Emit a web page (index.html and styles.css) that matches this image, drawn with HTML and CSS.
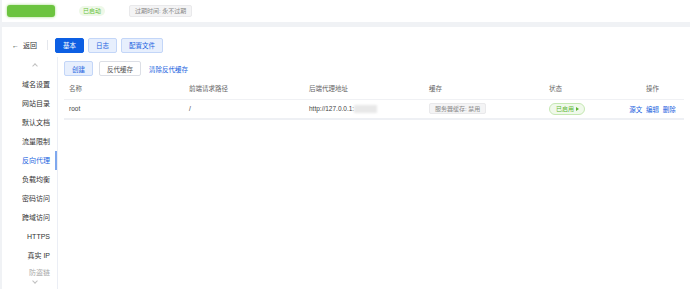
FILE: index.html
```html
<!DOCTYPE html>
<html lang="zh-CN">
<head>
    <meta charset="UTF-8">
    <meta name="viewport" content="width=device-width, initial-scale=1.0">
    <title>网站设置</title>
    <link rel="stylesheet" href="styles.css">
</head>
<body>
    <div class="top-bar">
        <span class="site-name"></span>
        <span class="tag-run">已启动</span>
        <span class="tag-expire">过期时间: 永不过期</span>
    </div>

    <div class="panel">
        <div class="panel-head">
            <a class="back">&larr;&nbsp; 返回</a>
            <span class="divider"></span>
            <button class="btn btn-primary">基本</button>
            <button class="btn btn-light">日志</button>
            <button class="btn btn-light">配置文件</button>
        </div>

        <div class="panel-body">
            <div class="side-nav">
                <div class="nav-arrow"><i class="chev up"></i></div>
                <div class="nav-item">域名设置</div>
                <div class="nav-item">网站目录</div>
                <div class="nav-item">默认文档</div>
                <div class="nav-item">流量限制</div>
                <div class="nav-item active">反向代理</div>
                <div class="nav-item">负载均衡</div>
                <div class="nav-item">密码访问</div>
                <div class="nav-item">跨域访问</div>
                <div class="nav-item">HTTPS</div>
                <div class="nav-item">真实 IP</div>
                <div class="nav-item faded">防盗链</div>
                <div class="nav-fade"><i class="chev down"></i></div>
            </div>

            <div class="content">
                <div class="toolbar">
                    <button class="btn btn-light">创建</button>
                    <button class="btn btn-plain">反代缓存</button>
                    <a class="link">清除反代缓存</a>
                </div>

                <table class="proxy-table">
                    <colgroup>
                        <col class="w-120">
                        <col class="w-120">
                        <col class="w-120">
                        <col class="w-120">
                        <col class="w-77">
                        <col>
                    </colgroup>
                    <thead>
                        <tr>
                            <th>名称</th>
                            <th>前端请求路径</th>
                            <th>后端代理地址</th>
                            <th>缓存</th>
                            <th>状态</th>
                            <th class="col-ops">操作</th>
                        </tr>
                    </thead>
                    <tbody>
                        <tr>
                            <td>root</td>
                            <td>/</td>
                            <td>http://127.0.0.1:<span class="masked"></span></td>
                            <td><span class="tag-cache">服务器缓存: 禁用</span></td>
                            <td><span class="tag-status">已启用 <i class="tri"></i></span></td>
                            <td class="col-ops">
                                <a class="link">源文</a>
                                <a class="link">编辑</a>
                                <a class="link">删除</a>
                            </td>
                        </tr>
                    </tbody>
                </table>
            </div>
        </div>
    </div>
</body>
</html>
```

FILE: styles.css
```css
* {
    box-sizing: border-box;
}
body {
    margin: 0;
    padding-left: 2px;
    height: 289px;
    overflow: hidden;
    background-color: #f0f2f5;
    font-family: "Liberation Sans", "Noto Sans CJK SC", sans-serif;
    color: #333;
    display: flex;
    flex-direction: column;
}
.top-bar {
    height: 22px;
    background-color: #fff;
    display: flex;
    align-items: center;
    padding-left: 5px;
}
.site-name {
    width: 48px;
    height: 12px;
    background-color: #6cc43f;
    border-radius: 3px;
    box-shadow: 0 0 3px #9fdc7c;
}
.tag-run {
    margin-left: 24px;
    padding: 0 4px;
    height: 10px;
    line-height: 10px;
    font-size: 6px;
    color: #67c23a;
    background-color: #eef8e8;
    border-radius: 5px;
}
.tag-expire {
    margin-left: 24px;
    padding: 0 5px;
    height: 12px;
    line-height: 11px;
    font-size: 6px;
    color: #888;
    background-color: #f4f4f5;
    border: 1px solid #e9e9eb;
    border-radius: 2px;
}
.panel {
    margin-top: 5px;
    flex: 1;
    background-color: #fff;
    display: flex;
    flex-direction: column;
}
.panel-head {
    display: flex;
    align-items: center;
    padding: 10px 0 0 10px;
    height: 26px;
}
.back {
    font-size: 7px;
    color: #333;
    width: 35px;
}
.divider {
    width: 1px;
    height: 10px;
    background-color: #e4e7ed;
    margin-right: 7px;
}
.btn {
    height: 15px;
    padding: 0 7px;
    font-family: inherit;
    font-size: 6.5px;
    border-radius: 2px;
    margin-right: 4px;
    cursor: pointer;
}
.btn-primary {
    background-color: #0d5fe3;
    border: 1px solid #0d5fe3;
    color: #fff;
}
.btn-light {
    background-color: #e7effd;
    border: 1px solid #c3d6f8;
    color: #1a63e0;
}
.btn-plain {
    background-color: #fff;
    border: 1px solid #dcdfe6;
    color: #555;
    margin-left: 2px;
}
.link {
    color: #1a63e0;
    font-size: 6.5px;
}
.panel-body {
    flex: 1;
    display: flex;
    margin-top: 4px;
}
.side-nav {
    width: 56px;
    border-right: 1px solid #ebeef5;
    position: relative;
    overflow: hidden;
}
.chev {
    display: block;
    width: 4px;
    height: 4px;
    margin: 0 auto;
    border-left: 1px solid #c0c0c0;
    border-top: 1px solid #c0c0c0;
}
.chev.up {
    transform: rotate(45deg);
}
.chev.down {
    transform: rotate(225deg);
}
.nav-arrow {
    height: 18px;
    padding: 7px 0 0 10px;
}
.nav-item {
    height: 19px;
    line-height: 19px;
    font-size: 7px;
    text-align: right;
    padding-right: 7px;
    color: #333;
}
.nav-item.active {
    color: #1a63e0;
    box-shadow: inset -2px 0 0 #7fa8ee;
}
.nav-item.faded {
    line-height: 15px;
    color: #aaa;
}
.nav-fade {
    position: absolute;
    left: 0;
    right: 0;
    bottom: 0;
    height: 12px;
    background: linear-gradient(rgba(255, 255, 255, 0.7), #fff 50%);
    padding: 2px 0 0 10px;
}
.content {
    flex: 1;
    padding: 4px 0 0 6px;
}
.toolbar {
    display: flex;
    align-items: center;
    height: 15px;
}
.toolbar .link {
    margin-left: 4px;
}
.proxy-table {
    width: 620px;
    table-layout: fixed;
    border-collapse: collapse;
    margin-top: 1px;
    font-size: 6.5px;
}
.w-120 {
    width: 120px;
}
.w-77 {
    width: 77px;
}
.proxy-table th {
    text-align: left;
    font-weight: normal;
    color: #666;
    height: 22px;
    padding: 0 5px;
    border-bottom: 1px solid #f0f1f4;
}
.proxy-table td {
    height: 20px;
    padding: 0 5px;
    color: #444;
    border-bottom: 2px solid #eef0f4;
    white-space: nowrap;
}
.proxy-table .col-ops {
    text-align: center;
    padding: 0;
}
.col-ops .link {
    margin: 0 1px;
}
.masked {
    display: inline-block;
    width: 23px;
    height: 8px;
    background-color: #e8e8e8;
    vertical-align: middle;
    filter: blur(1px);
}
.tag-cache {
    display: inline-block;
    padding: 0 5px;
    height: 11px;
    line-height: 10px;
    font-size: 6px;
    color: #888;
    background-color: #f4f4f5;
    border: 1px solid #e9e9eb;
    border-radius: 2px;
}
.tag-status {
    display: inline-block;
    padding: 0 5px 0 6px;
    height: 12px;
    line-height: 10px;
    font-size: 6px;
    color: #5bb531;
    background-color: #f0f9eb;
    border: 1px solid #c5e8b2;
    border-radius: 6px;
}
.tri {
    display: inline-block;
    width: 0;
    height: 0;
    border-left: 3px solid #5bb531;
    border-top: 2px solid transparent;
    border-bottom: 2px solid transparent;
}
```
